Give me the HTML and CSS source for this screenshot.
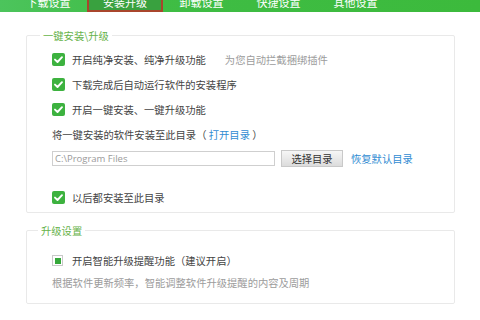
FILE: index.html
```html
<!DOCTYPE html>
<html lang="zh-CN">
<head>
<meta charset="utf-8">
<title>安装升级</title>
<link rel="stylesheet" href="styles.css">
</head>
<body>
<div class="tabs">
  <div class="tab">下载设置</div>
  <div class="tab tab-active">安装升级</div>
  <div class="tab">卸载设置</div>
  <div class="tab">快捷设置</div>
  <div class="tab">其他设置</div>
</div>
<div class="content">
  <div class="group group-install">
    <div class="gtitle">一键安装\升级</div>
    <div class="gbody">
      <div class="row">
        <span class="chk"><svg width="13" height="13" viewBox="0 0 13 13"><path d="M3 6.6 L5.5 9 L10 4.2" fill="none" stroke="#fff" stroke-width="1.9" stroke-linecap="round" stroke-linejoin="round"/></svg></span>
        <span>开启纯净安装、纯净升级功能</span>
        <span class="hint">为您自动拦截捆绑插件</span>
      </div>
      <div class="row">
        <span class="chk"><svg width="13" height="13" viewBox="0 0 13 13"><path d="M3 6.6 L5.5 9 L10 4.2" fill="none" stroke="#fff" stroke-width="1.9" stroke-linecap="round" stroke-linejoin="round"/></svg></span>
        <span>下载完成后自动运行软件的安装程序</span>
      </div>
      <div class="row">
        <span class="chk"><svg width="13" height="13" viewBox="0 0 13 13"><path d="M3 6.6 L5.5 9 L10 4.2" fill="none" stroke="#fff" stroke-width="1.9" stroke-linecap="round" stroke-linejoin="round"/></svg></span>
        <span>开启一键安装、一键升级功能</span>
      </div>
      <div class="row">
        <span>将一键安装的软件安装至此目录（ <a class="link">打开目录</a> ）</span>
      </div>
      <div class="dir-row">
        <div class="input">C:\Program Files</div>
        <div class="btn">选择目录</div>
        <a class="link reset">恢复默认目录</a>
      </div>
      <div class="row row-last">
        <span class="chk"><svg width="13" height="13" viewBox="0 0 13 13"><path d="M3 6.6 L5.5 9 L10 4.2" fill="none" stroke="#fff" stroke-width="1.9" stroke-linecap="round" stroke-linejoin="round"/></svg></span>
        <span>以后都安装至此目录</span>
      </div>
    </div>
  </div>
  <div class="group group-upgrade">
    <div class="gtitle gtitle-2">升级设置</div>
    <div class="gbody gbody-2">
      <div class="row">
        <span class="chk2"><span class="chk2-dot"></span></span>
        <span>开启智能升级提醒功能（建议开启）</span>
      </div>
      <div class="desc">根据软件更新频率，智能调整软件升级提醒的内容及周期</div>
    </div>
  </div>
</div>
</body>
</html>
```
FILE: styles.css
```css
* { box-sizing: border-box; }
html, body {
  margin: 0;
  padding: 0;
}
body {
  width: 480px;
  height: 320px;
  overflow: hidden;
  background: #fff;
  color: #444;
  font-family: "Noto Sans CJK SC", "Noto Sans", sans-serif;
  font-size: 10.3px;
}
.tabs {
  display: flex;
  align-items: flex-end;
  height: 12px;
  overflow: hidden;
  padding-left: 10px;
  background: linear-gradient(90deg, #4cc45c 0%, #3fbd45 30%, #3cba3c 100%);
}
.tab {
  flex: none;
  width: 77px;
  height: 20px;
  line-height: 20px;
  text-align: center;
  color: #fff;
  font-size: 11px;
}
.tab-active {
  width: 76px;
  line-height: 16px;
  border: 2px solid #a9462c;
  background: #39a13f;
}
.content {
  padding: 23px 25px 0 26px;
}
.group {
  border: 1px solid #e9e9e9;
  border-radius: 2px;
}
.group-upgrade {
  margin-top: 17px;
}
.gtitle {
  width: max-content;
  margin: -7px 0 0 13px;
  padding: 0 3px;
  line-height: 14px;
  background: #fff;
  color: #66b24a;
}
.gtitle-2 {
  margin-left: 11px;
}
.gbody {
  padding: 4px 0 2px 25px;
}
.gbody-2 {
  padding: 10px 0 10px 25px;
}
.row {
  display: flex;
  align-items: center;
  height: 25px;
}
.row-last {
  margin-top: 18px;
}
.chk {
  flex: none;
  width: 13px;
  height: 13px;
  margin-right: 7px;
  border-radius: 2px;
  background: #3db23f;
  display: flex;
}
.hint {
  margin-left: 19px;
  color: #9c9c9c;
}
.link {
  color: #2f8bd2;
}
.dir-row {
  display: flex;
  align-items: center;
  height: 17px;
  margin-top: 3px;
}
.input {
  flex: none;
  width: 223px;
  height: 15px;
  border: 1px solid #cfcfcf;
  padding-left: 2px;
  color: #9a9a9a;
  font-family: "Open Sans", "Noto Sans", sans-serif;
  font-size: 9.5px;
  line-height: 13px;
  background: #fff;
}
.btn {
  flex: none;
  width: 62px;
  height: 17px;
  margin-left: 6px;
  border: 1px solid #c9c9c9;
  background: linear-gradient(#f6f6f6, #dcdcdc);
  text-align: center;
  line-height: 15px;
  color: #333;
}
.reset {
  margin-left: 8px;
}
.chk2 {
  flex: none;
  width: 11px;
  height: 11px;
  margin-right: 9px;
  border: 1px solid #c9c9c9;
  background: #fff;
  display: flex;
  align-items: center;
  justify-content: center;
}
.chk2-dot {
  width: 6px;
  height: 6px;
  background: #35a83a;
}
.desc {
  height: 20px;
  line-height: 20px;
  color: #9c9c9c;
}
```
